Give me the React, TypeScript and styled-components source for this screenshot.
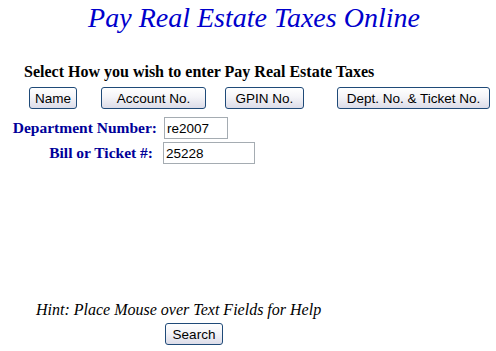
import styled, { createGlobalStyle } from "styled-components";

const Global = createGlobalStyle`
  html, body {
    margin: 0;
    padding: 0;
    background: #ffffff;
  }
  body {
    font-family: "Liberation Serif", "Times New Roman", serif;
  }
`;

const Page = styled.div`
  width: 496px;
  height: 351px;
  overflow: hidden;
  display: flex;
  flex-direction: column;
`;

const Title = styled.h1`
  margin: 0;
  padding: 2px 0 0 12px;
  text-align: center;
  font-family: "Liberation Serif", "Times New Roman", serif;
  font-style: italic;
  font-weight: normal;
  font-size: 28px;
  line-height: 32px;
  color: #0000cc;
`;

const Prompt = styled.h2`
  margin: 29px 0 0 24px;
  font-size: 16px;
  font-weight: bold;
  line-height: 18px;
  color: #000000;
`;

const ButtonRow = styled.div`
  display: flex;
  align-items: center;
  margin-top: 6px;
  padding-left: 29px;
`;

const Button = styled.button<{ $w: number; $ml?: number }>`
  box-sizing: border-box;
  width: ${(p) => p.$w}px;
  height: 22px;
  margin-left: ${(p) => p.$ml ?? 0}px;
  padding: 0;
  border: 1px solid #1f4a78;
  border-radius: 3px;
  background: linear-gradient(#ffffff 0%, #f4f4f8 45%, #dcdce8 100%);
  font-family: "Liberation Sans", Arial, sans-serif;
  font-size: 13.5px;
  color: #000000;
  cursor: pointer;
`;

const Form = styled.div`
  display: grid;
  grid-template-columns: 157px auto;
  column-gap: 6px;
  row-gap: 3px;
  align-items: center;
  margin-top: 8px;
`;

const Label = styled.label<{ $pr?: number }>`
  text-align: right;
  padding-right: ${(p) => p.$pr ?? 0}px;
  font-size: 15.5px;
  font-weight: bold;
  color: #000099;
`;

const Field = styled.input<{ $w: number; $ml?: number }>`
  box-sizing: border-box;
  width: ${(p) => p.$w}px;
  height: 22px;
  margin: 0 0 0 ${(p) => p.$ml ?? 0}px;
  padding: 1px 2px;
  border: 1px solid #a5acb2;
  font-family: "Liberation Sans", Arial, sans-serif;
  font-size: 13.5px;
  color: #000000;
  outline: none;
`;

const Hint = styled.p`
  margin: 137px 0 0 36px;
  font-style: italic;
  font-size: 16px;
  line-height: 18px;
  color: #000000;
`;

const SearchRow = styled.div`
  display: flex;
  padding-left: 165px;
  margin-top: 4px;
`;

export default function App() {
  return (
    <>
      <Global />
      <Page>
        <Title>Pay Real Estate Taxes Online</Title>
        <Prompt>Select How you wish to enter Pay Real Estate Taxes</Prompt>
        <ButtonRow>
          <Button $w={48}>Name</Button>
          <Button $w={105} $ml={24}>
            Account No.
          </Button>
          <Button $w={79} $ml={19}>
            GPIN No.
          </Button>
          <Button $w={153} $ml={33}>
            Dept. No. &amp; Ticket No.
          </Button>
        </ButtonRow>
        <Form>
          <Label htmlFor="dept">Department Number:</Label>
          <Field id="dept" $w={64} $ml={1} defaultValue="re2007" />
          <Label htmlFor="bill" $pr={4}>
            Bill or Ticket #:
          </Label>
          <Field id="bill" $w={92} defaultValue="25228" />
        </Form>
        <Hint>Hint: Place Mouse over Text Fields for Help</Hint>
        <SearchRow>
          <Button $w={58}>Search</Button>
        </SearchRow>
      </Page>
    </>
  );
}
